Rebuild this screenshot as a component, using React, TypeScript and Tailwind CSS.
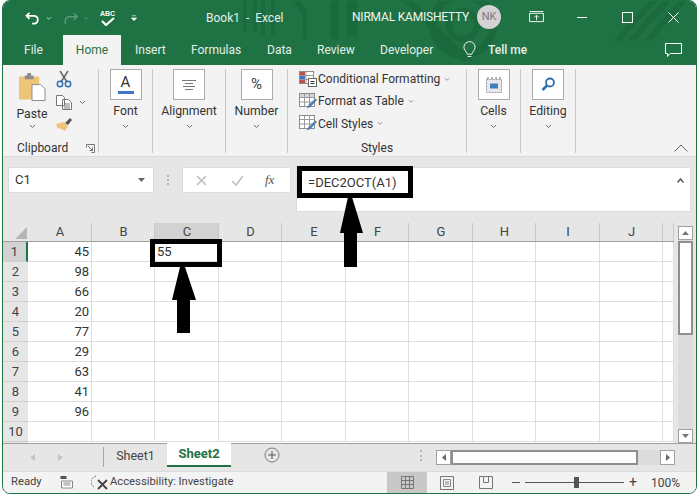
import React from "react";

const Chev = ({ c = "#666", w = 7 }: { c?: string; w?: number }) => (
  <svg width={w} height="5" viewBox="0 0 7 5" className="shrink-0"><path d="M1 1l2.5 2.5L6 1" fill="none" stroke={c} strokeWidth="1" /></svg>
);

const Sep = () => <div className="w-px h-[84px] mt-[4px] bg-[#c8c8c8] shrink-0" />;

const BigGroup = ({ w, label, icon }: { w: string; label: string; icon: React.ReactNode }) => (
  <div className={`${w} flex flex-col items-center pt-[4px] shrink-0`}>
    <div className="w-[32px] h-[31px] bg-white border border-[#ababab] flex items-center justify-center shrink-0">{icon}</div>
    <div className="text-[12.25px] leading-[16px] mt-[3px] text-[#333]">{label}</div>
    <div className="mt-[5px]"><Chev /></div>
  </div>
);

const colW = [64, 63, 64, 63, 64, 63, 64, 63, 64, 63, 11];
const colL = ["A", "B", "C", "D", "E", "F", "G", "H", "I", "J", ""];
const vals = ["45", "98", "66", "20", "77", "29", "63", "41", "96", ""];

const StyleRow = ({ label, icon, chev = true }: { label: string; icon: React.ReactNode; chev?: boolean }) => (
  <div className="flex items-center h-[23px] text-[12px] text-[#333] whitespace-nowrap">
    <div className="w-[19px] h-[17px] shrink-0">{icon}</div>
    <span>{label}</span>
    {chev && <span className="ml-[4px]"><Chev c="#888" w={6} /></span>}
  </div>
);

const TableIcon = ({ brush = true, head = "#cfd6e0" }: { brush?: boolean; head?: string }) => (
  <svg width="18" height="17" viewBox="0 0 18 17">
    <rect x="0.5" y="0.5" width="15" height="13" fill="#fff" stroke="#8c8c8c" />
    <rect x="1" y="1" width="14" height="3" fill={head} />
    <path d="M5.5 1v12M10.5 1v12M1 4.5h14M1 9h14" stroke="#9a9a9a" strokeWidth="1" />
    {brush && <path d="M16.5 5.5L9.5 12l-2 3.5 4-1.5 6.5-7z" fill="#4c80b8" />}
  </svg>
);

export default function App() {
  return (
    <div className="relative w-[700px] h-[497px] bg-white overflow-hidden" style={{ fontFamily: 'Roboto,"Noto Sans",sans-serif' }}>
      <div className="ml-[2px] w-[695px] h-[494px] rounded-[8px] border border-[#1f7244] overflow-hidden flex flex-col bg-[#e6e6e6]">
        {/* title + tab band */}
        <div className="relative h-[64px] bg-[#1f7244] shrink-0 overflow-hidden">
          <svg className="absolute left-0 top-0" width="695" height="64" viewBox="0 0 695 64">
            <g fill="#1b6a3e">
              <path d="M240 0h4v30h-4zM250 0h4v30h-4zM258 0h4v34h-4zM268 0h4v34h-4zM290 0h8l6 12v26h-4V14zM328 0h8v38h-8zM344 0h10v36h-10z" />
              <circle cx="460" cy="24" r="30" fill="none" stroke="#1b6a3e" strokeWidth="8" />
              <circle cx="460" cy="24" r="14" fill="none" stroke="#1b6a3e" strokeWidth="6" />
              <path d="M400 0h10l60 60h-10zM610 40l36-40h8l-36 40zM624 40l36-40h8l-36 40zM640 40l36-40h8l-36 40z" />
            </g>
          </svg>
          {/* title row */}
          <div className="relative h-[34px] flex items-center text-white">
            <div className="w-[203px] flex items-center shrink-0">
              <svg className="ml-[22px]" width="16" height="14" viewBox="0 0 18 16"><path d="M5 2L1.500 5.500 5 9M2 5.500h8a4.500 4.500 0 0 1 4.500 4.500v.5A4.500 4.500 0 0 1 11 14.500H8" fill="none" stroke="#fff" strokeWidth="2" /></svg>
              <span className="ml-[5px]"><Chev c="#cfe3d8" w={6} /></span>
              <svg className="ml-[11px]" width="15" height="13" viewBox="0 0 17 14"><path d="M12 1l4 4-4 4M15 5H7a4.500 4.500 0 0 0-4.500 4.500V13" fill="none" stroke="#5f9c7b" strokeWidth="1.600" /></svg>
              <span className="ml-[5px]"><Chev c="#5f9c7b" w={6} /></span>
              <div className="ml-[11px] w-[15px] flex flex-col items-center">
                <span className="text-[7px] leading-[7px] font-bold" style={{ fontFamily: '"Liberation Sans",sans-serif' }}>ABC</span>
                <svg width="14" height="9" viewBox="0 0 14 9"><path d="M1 4l4 4 8-7" fill="none" stroke="#fff" strokeWidth="2.200" /></svg>
              </div>
              <svg className="ml-[16px]" width="6" height="8" viewBox="0 0 8 9"><path d="M1 1.500h6M0.500 4.500h7L4 8z" fill="#fff" stroke="#fff" strokeWidth="0.800" /></svg>
            </div>
            <div className="w-[146px] text-[12px] text-[#e4efe9] shrink-0 whitespace-nowrap">Book1&nbsp; -&nbsp; Excel</div>
            <div className="text-[12px] tracking-[-0.2px] text-[#eef5f1] w-[125px] shrink-0 whitespace-nowrap -mt-[2px]">NIRMAL KAMISHETTY</div>
            <div className="w-[24px] h-[24px] rounded-full bg-[#d5d2d6] text-[#7b7680] text-[11px] flex items-center justify-center shrink-0 -mt-[2px]">NK</div>
            <svg className="ml-[28px] -mt-[2px]" width="15" height="12" viewBox="0 0 16 13"><path d="M.5 2.500h15v9H.5zM.5 .5h15M8 10V5M5.500 7L8 4.500 10.500 7" fill="none" stroke="#fff" /></svg>
            <div className="ml-[33px] w-[10px] h-px bg-white -mt-[2px]" />
            <div className="ml-[35px] w-[11px] h-[11px] border border-white -mt-[2px]" />
            <svg className="ml-[35px] -mt-[2px]" width="11" height="11" viewBox="0 0 11 11"><path d="M.5 .5l10 10M10.500 .5l-10 10" stroke="#fff" /></svg>
          </div>
          {/* tabs */}
          <div className="relative h-[30px] flex items-center text-[12px] text-[#e4efe9]">
            <span className="ml-[21px] w-[39px]">File</span>
            <div className="w-[58px] h-[30px] bg-[#f3f3f3] text-[#1f7244] flex items-center justify-center shrink-0">Home</div>
            <span className="ml-[14px] w-[56px]">Insert</span>
            <span className="w-[76px]">Formulas</span>
            <span className="w-[50px]">Data</span>
            <span className="w-[63px]">Review</span>
            <span className="w-[83px]">Developer</span>
            <svg width="13" height="18" viewBox="0 0 14 18"><path d="M4.500 13.500C4 10.500 1 9.500 1 6a6 6 0 0 1 12 0c0 3.500-3 4.500-3.500 7.500zM5 16h4" fill="none" stroke="#fff" /></svg>
            <span className="ml-[12px] font-medium w-[38px] whitespace-nowrap">Tell me</span>
            <svg className="ml-[139px]" width="17" height="15" viewBox="0 0 17 15"><path d="M.5 .5h16v10H5L2.500 13.500V10.500H.5z" fill="none" stroke="#fff" /></svg>
          </div>
        </div>

        {/* ribbon */}
        <div className="relative h-[92px] bg-[#f3f3f3] border-b border-[#dadada] flex shrink-0">
          <div className="w-[95px] shrink-0 relative flex flex-col">
            <div className="flex h-[71px] shrink-0">
              <div className="w-[50px] flex flex-col items-center pt-[7px] pl-[8px]">
                <svg width="28" height="30" viewBox="0 0 29 30">
                  <path d="M1 4h21v24H1z" fill="#eec578" />
                  <path d="M7 3h9v4H7z" fill="#8c8c8c" /><path d="M9.500 .5h4v3h-4z" fill="#8c8c8c" />
                  <path d="M14.500 12.500h9l4.500 4.500v12h-13.500z" fill="#fff" stroke="#8c8c8c" />
                </svg>
                <div className="text-[12.25px] leading-[16px] mt-[4px] text-[#333]">Paste</div>
                <div className="mt-[2px]"><Chev /></div>
              </div>
              <div className="flex flex-col pl-[3px] pt-[5px] gap-[7px]">
                <svg width="16" height="18" viewBox="0 0 16 18"><path d="M4 1l7 11M12 1L5 12" stroke="#666" strokeWidth="1.500" /><circle cx="4" cy="14" r="2.700" fill="none" stroke="#2f6fb0" strokeWidth="1.500" /><circle cx="12" cy="14" r="2.700" fill="none" stroke="#2f6fb0" strokeWidth="1.500" /></svg>
                <div className="flex items-center gap-[7px]">
                  <svg width="16" height="15" viewBox="0 0 16 15"><path d="M.5 .5h6l2 2v8h-8zM6.500 4.500h6l3 3v7h-9z" fill="#fff" stroke="#777" /><path d="M8 9h6M8 11h6M8 13h6" stroke="#777" /></svg>
                  <Chev />
                </div>
                <svg width="16" height="14" viewBox="0 0 16 14"><path d="M9 6l5-5 2 2-4 5z" fill="#555" /><path d="M0 7l8-2 4 4-3 5-4-2-1-1-2 1-1-2z" fill="#eec578" /></svg>
              </div>
            </div>
            <div className="flex items-center h-[16px] shrink-0 text-[12px] text-[#333] mt-[4px]">
              <span className="ml-[14px] w-[55px]">Clipboard</span>
              <svg className="ml-[14px]" width="9" height="9" viewBox="0 0 9 9"><path d="M.5 3.500V.5h8v8h-3M2 2l4.500 4.500M3.500 6.500h3v-3" fill="none" stroke="#777" /></svg>
            </div>
          </div>
          <Sep />
          <BigGroup w="w-[53px]" label="Font" icon={<div className="flex flex-col items-center"><span className="text-[15px] leading-[14px] text-[#333]">A</span><div className="w-[16px] h-[3px] bg-[#4472c4] mt-[2px]" /></div>} />
          <Sep />
          <BigGroup w="w-[72px]" label="Alignment" icon={<svg width="14" height="10" viewBox="0 0 14 10"><path d="M0 .5h14M3 3.500h8M1 6.500h12M3 9.500h8" stroke="#777" /></svg>} />
          <Sep />
          <BigGroup w="w-[61px]" label="Number" icon={<span className="text-[15px] text-[#444]">%</span>} />
          <Sep />
          <div className="w-[178px] shrink-0 flex flex-col pl-[11px] pt-[3px] relative">
            <StyleRow label="Conditional Formatting" icon={<svg width="18" height="17" viewBox="0 0 18 17"><rect x=".5" y=".5" width="14" height="12" fill="#fff" stroke="#8c8c8c" /><path d="M1 1h5v3H1z" fill="#c0504d" /><path d="M1 5h5v3H1z" fill="#4472c4" /><path d="M1 9h5v3H1z" fill="#c0504d" /><path d="M7 .5v12M1 4.500h14M1 8.500h14" stroke="#9a9a9a" /><rect x="9.500" y="7.500" width="8" height="8" fill="#fff" stroke="#666" /><path d="M11.500 10.500h4M11.500 12.500h4" stroke="#333" /></svg>} />
            <StyleRow label="Format as Table" icon={<TableIcon />} />
            <StyleRow label="Cell Styles" icon={<TableIcon head="#fff" />} />
            <div className="text-center text-[12px] leading-[16px] pr-[11px] mt-[5px] text-[#333]">Styles</div>
          </div>
          <Sep />
          <BigGroup w="w-[53px]" label="Cells" icon={<svg width="16" height="16" viewBox="0 0 16 16"><path d="M.5 2.500h15v13H.5z" fill="#e8e8e8" stroke="#999" strokeDasharray="2 1" /><path d="M4 6.500h8v5H4z" fill="#3f7cbf" /><path d="M1 1h14" stroke="#666" strokeDasharray="2 2" /></svg>} />
          <Sep />
          <BigGroup w="w-[54px]" label="Editing" icon={<svg width="15" height="15" viewBox="0 0 15 15"><circle cx="9" cy="5.500" r="4" fill="none" stroke="#2f6fb0" strokeWidth="1.800" /><path d="M6 8.500L1.500 13" stroke="#2f6fb0" strokeWidth="2.500" /></svg>} />
          <Sep />
          <svg className="absolute right-[8px] bottom-[4px]" width="14" height="8" viewBox="0 0 14 8"><path d="M.5 7.500L7 1l6.500 6.500" fill="none" stroke="#666" /></svg>
        </div>

        {/* formula bar */}
        <div className="h-[66px] flex items-start pt-[10px] shrink-0 bg-[#e6e6e6]">
          <div className="ml-[5px] w-[146px] h-[26px] bg-white border border-[#dcdcdc] flex items-center pl-[6px] pr-[8px] justify-between text-[13px] text-[#333]">
            <span>C1</span>
            <svg width="7" height="4" viewBox="0 0 7 4"><path d="M0 0h7L3.500 4z" fill="#666" /></svg>
          </div>
          <div className="ml-[13px] w-[2px] h-[10px] mt-[8px] border-l-2 border-dotted border-[#b5b5b5]" />
          <div className="ml-[13px] w-[109px] h-[26px] bg-white border border-[#dcdcdc] flex items-center">
            <svg className="ml-[13px]" width="11" height="11" viewBox="0 0 11 11"><path d="M1 1l9 9M10 1l-9 9" stroke="#bdbdbd" strokeWidth="1.500" /></svg>
            <svg className="ml-[24px]" width="13" height="11" viewBox="0 0 13 11"><path d="M1 6l4 4 7-9" fill="none" stroke="#bdbdbd" strokeWidth="1.500" /></svg>
            <span className="ml-[21px] text-[13px] italic text-[#555]" style={{ fontFamily: '"Liberation Serif",serif' }}>fx</span>
          </div>
          <div className="ml-[5px] w-[395px] h-[45px] bg-white border border-[#dcdcdc] flex justify-between pl-[11px] pr-[6px] pt-[5px] text-[13px] text-[#333]">
            <span>=DEC2OCT(A1)</span>
            <svg className="mt-[5px]" width="7" height="5" viewBox="0 0 7 5"><path d="M.5 4.500L3.500 1l3 3.500" fill="none" stroke="#555" strokeWidth="1.500" /></svg>
          </div>
        </div>

        {/* sheet */}
        <div className="flex-1 flex bg-[#e6e6e6] min-h-0">
          <div className="w-[671px] shrink-0 flex flex-col overflow-hidden">
            <div className="flex h-[19px] shrink-0 text-[13px] text-[#444] border-b border-[#9f9f9f]">
              <div className="w-[25px] shrink-0 relative">
                <svg className="absolute right-[1px] bottom-[2px]" width="12" height="12" viewBox="0 0 12 12"><path d="M12 0v12H0z" fill="#b5b5b5" /></svg>
              </div>
              {colL.map((c, i) => (
                <div key={i} style={{ width: colW[i] }} className={`shrink-0 flex items-center justify-center border-r border-[#c8c8c8] pl-[1px] ${c === "C" ? "bg-[#d2d2d2]" : ""}`}>{c}</div>
              ))}
            </div>
            {vals.map((v, r) => (
              <div key={r} className="flex h-[20px] shrink-0 text-[13px] text-[#333]">
                <div className={`w-[25px] shrink-0 flex items-center justify-center border-b border-[#d0d0d0] text-[#444] pt-[1px] ${r === 0 ? "bg-[#d2d2d2] border-r-2 border-r-[#1f7244]" : ""}`}>{r + 1}</div>
                {colW.map((w, c) => (
                  <div key={c} style={{ width: w }} className="shrink-0 bg-white border-r border-b border-[#dedede] flex items-center justify-end pr-[2px] pt-[1px]">
                    {c === 0 ? v : ""}
                    {c === 2 && r === 0 ? <span className="mr-auto pl-[2px]">55</span> : ""}
                  </div>
                ))}
              </div>
            ))}
            <div className="flex h-[2px] shrink-0">
              <div className="w-[25px] shrink-0" />
              <div className="flex-1 bg-white" />
            </div>
          </div>
          <div className="w-[4px] shrink-0" />
          <div className="w-[15px] shrink-0 flex flex-col bg-[#dcdcdc] mt-[3px]">
            <div className="h-[14px] bg-white border border-[#a0a0a0] flex items-center justify-center shrink-0"><svg width="7" height="4" viewBox="0 0 7 4"><path d="M3.500 0L7 4H0z" fill="#777" /></svg></div>
            <div className="h-[94px] bg-white border-2 border-[#8f8f8f] mt-[1px] shrink-0" />
            <div className="flex-1" />
            <div className="h-[14px] bg-white border border-[#a0a0a0] flex items-center justify-center shrink-0"><svg width="7" height="4" viewBox="0 0 7 4"><path d="M3.500 4L7 0H0z" fill="#777" /></svg></div>
          </div>
        </div>

        {/* sheet tabs */}
        <div className="h-[28px] relative flex items-start shrink-0 bg-[#e6e6e6] border-t border-[#9f9f9f] text-[12.5px] text-[#444]">
          <svg className="ml-[27px] mt-[10px]" width="5" height="7" viewBox="0 0 5 7"><path d="M5 0v7L0 3.500z" fill="#c4c4c4" /></svg>
          <svg className="ml-[23px] mt-[10px]" width="5" height="7" viewBox="0 0 5 7"><path d="M0 0v7l5-3.500z" fill="#c4c4c4" /></svg>
          <div className="ml-[40px] mt-[3px] w-px h-[20px] bg-[#a8a8a8]" />
          <div className="w-[63px] h-[24px] flex items-center justify-center pt-[1px]">Sheet1</div>
          <div className="w-[64px] h-[24px] bg-white border-b-2 border-[#1f7244] text-[13px] text-[#1f7244] font-bold flex items-center justify-center -mt-px">Sheet2</div>
          <svg className="ml-[33px] mt-[3px]" width="16" height="16" viewBox="0 0 16 16"><circle cx="8" cy="8" r="7" fill="none" stroke="#777" /><path d="M8 4v8M4 8h8" stroke="#555" /></svg>
          <div className="ml-[140px] mt-[6px] w-[2px] h-[11px] border-l-2 border-dotted border-[#b5b5b5]" />
          <div className="ml-[14px] mt-[6px] flex h-[15px] w-[239px] bg-[#dcdcdc]">
            <div className="w-[15px] bg-white border border-[#a0a0a0] flex items-center justify-center shrink-0"><svg width="4" height="7" viewBox="0 0 4 7"><path d="M4 0v7L0 3.500z" fill="#666" /></svg></div>
            <div className="w-[187px] bg-white border-2 border-[#8f8f8f] shrink-0" />
            <div className="flex-1" />
            <div className="w-[15px] bg-white border border-[#a0a0a0] flex items-center justify-center shrink-0"><svg width="4" height="7" viewBox="0 0 4 7"><path d="M0 0v7l4-3.500z" fill="#666" /></svg></div>
          </div>
        </div>

        {/* status bar */}
        <div className="h-[22px] flex items-center shrink-0 bg-[#f3f3f3] border-t border-[#dadada] text-[11.25px] text-[#444]">
          <span className="ml-[8px] w-[49px]">Ready</span>
          <svg width="14" height="13" viewBox="0 0 13 13"><path d="M0 0h6v3H0z" fill="#555" /><path d="M1 5h11v7H1z" fill="#fff" stroke="#888" /><path d="M3 7h7M3 9h7" stroke="#888" /></svg>
          <svg className="ml-[17px]" width="18" height="15" viewBox="0 0 18 15"><path d="M5 1A6 6 0 0 0 3 12" fill="none" stroke="#777" strokeDasharray="2 1" /><path d="M7 5l9 9M16 5l-9 9" stroke="#444" strokeWidth="1.800" /></svg>
          <span className="ml-[1px] w-[277px] whitespace-nowrap">Accessibility: Investigate</span>
          <div className="w-[40px] h-full bg-[#c8c8c8] flex items-center justify-center shrink-0">
            <svg width="13" height="13" viewBox="0 0 13 13"><path d="M.5 .5h12v12H.5zM4.500 .5v12M8.500 .5v12M.5 4.500h12M.5 8.500h12" fill="none" stroke="#777" /></svg>
          </div>
          <svg className="ml-[13px]" width="14" height="14" viewBox="0 0 14 14"><path d="M.5 .5h13v13H.5z" fill="none" stroke="#777" /><path d="M3.500 3.500h7v7h-7zM5 6h4M5 8h4" fill="none" stroke="#888" /></svg>
          <svg className="ml-[25px]" width="14" height="13" viewBox="0 0 14 13"><path d="M.5 .5h13v12H.5zM4.500 .5v6h5v-6" fill="none" stroke="#777" /></svg>
          <div className="ml-[19px] w-[8px] h-px bg-[#555]" />
          <div className="ml-[5px] relative w-[99px] h-px bg-[#555]">
            <div className="absolute left-[49px] -top-[5px] w-[5px] h-[11px] bg-[#555]" />
          </div>
          <span className="ml-[5px] text-[14px] leading-[13px]">+</span>
          <span className="ml-[14px] text-[12px]">100%</span>
        </div>
      </div>

      {/* annotations */}
      <div className="absolute left-[297px] top-[166px] w-[116px] h-[32px] border-[5px] border-black" />
      <div className="absolute left-[150px] top-[239px] w-[72px] h-[28px] border-[5px] border-black" />
      <svg className="absolute left-[340px] top-[197px]" width="24" height="71" viewBox="0 0 24 71"><path d="M8 0H12L23 36H17V70H4V36H0z" fill="#000" /></svg>
      <svg className="absolute left-[172px] top-[267px]" width="25" height="67" viewBox="0 0 25 67"><path d="M8 0H13L24 33H18V66H5V33H0z" fill="#000" /></svg>
    </div>
  );
}
